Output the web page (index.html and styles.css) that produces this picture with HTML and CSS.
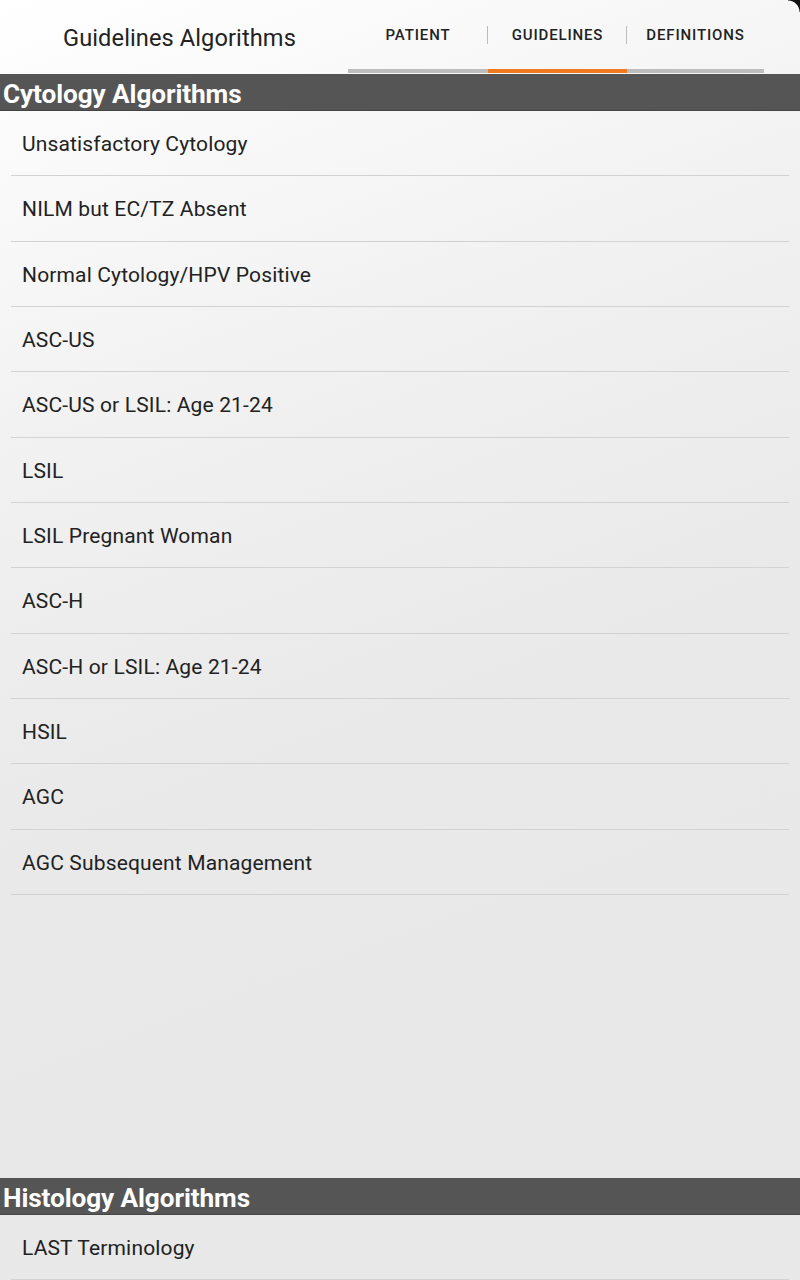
FILE: index.html
```html
<!DOCTYPE html>
<html lang="en">
<head>
<meta charset="utf-8">
<title>Guidelines Algorithms</title>
<link rel="stylesheet" href="styles.css">
</head>
<body>
<div class="screen">
  <header class="appbar">
    <div class="title">Guidelines Algorithms</div>
    <nav class="tabs">
      <div class="tab"><span class="tab-label">PATIENT</span></div>
      <div class="tab active"><span class="tab-label">GUIDELINES</span></div>
      <div class="tab"><span class="tab-label">DEFINITIONS</span></div>
    </nav>
  </header>

  <section class="group group-grow">
    <h2 class="group-title">Cytology Algorithms</h2>
    <ul class="list">
      <li class="item">Unsatisfactory Cytology</li>
      <li class="item">NILM but EC/TZ Absent</li>
      <li class="item">Normal Cytology/HPV Positive</li>
      <li class="item">ASC-US</li>
      <li class="item">ASC-US or LSIL: Age 21-24</li>
      <li class="item">LSIL</li>
      <li class="item">LSIL Pregnant Woman</li>
      <li class="item">ASC-H</li>
      <li class="item">ASC-H or LSIL: Age 21-24</li>
      <li class="item">HSIL</li>
      <li class="item">AGC</li>
      <li class="item">AGC Subsequent Management</li>
    </ul>
  </section>

  <section class="group">
    <h2 class="group-title">Histology Algorithms</h2>
    <ul class="list">
      <li class="item">LAST Terminology</li>
    </ul>
  </section>
  <div class="corner-tr"></div>
</div>
</body>
</html>
```

FILE: styles.css
```css
* { box-sizing: border-box; }

html, body {
  margin: 0;
  padding: 0;
}

body {
  font-family: Roboto, "Liberation Sans", sans-serif;
  color: #222;
}

.screen {
  position: relative;
  width: 800px;
  height: 1280px;
  display: flex;
  flex-direction: column;
  overflow: hidden;
  background: linear-gradient(160deg, #ffffff 0%, #f1f1f1 30%, #e9e9e9 55%, #e8e8e8 100%);
}

.appbar {
  height: 74px;
  display: flex;
  flex-shrink: 0;
}

.title {
  width: 348px;
  padding-left: 63px;
  padding-top: 1px;
  font-size: 23.6px;
  line-height: 74px;
  color: #222;
  letter-spacing: 0.1px;
}

.tabs {
  display: grid;
  grid-template-columns: 140px 139px 137px;
  width: 416px;
  height: 74px;
  padding-bottom: 1px;
}

.tab {
  position: relative;
  display: flex;
  align-items: center;
  justify-content: center;
  border-bottom: 4px solid #bdbdbd;
}

.tab + .tab::before {
  content: "";
  position: absolute;
  left: -1px;
  top: 26px;
  height: 18px;
  width: 1px;
  background: #bdbdbd;
}

.tab.active {
  border-bottom-color: #f07a1f;
}

.tab-label {
  font-size: 15px;
  font-weight: 500;
  letter-spacing: 0.85px;
  color: #222;
}

.group {
  display: flex;
  flex-direction: column;
  flex-shrink: 0;
}

.group-grow {
  flex: 1;
}

.group-title {
  margin: 0;
  height: 37px;
  background: #555555;
  border-bottom: 1px solid #444;
  color: #fff;
  font-size: 26.2px;
  font-weight: 700;
  line-height: 36px;
  padding-top: 2px;
  padding-left: 3px;
  letter-spacing: -0.1px;
}

.list {
  list-style: none;
  margin: 0;
  padding: 0;
}

.item {
  height: 65.33px;
  margin: 0 11px;
  padding-left: 11px;
  padding-top: 2px;
  border-bottom: 1.5px solid #d2d2d2;
  display: flex;
  align-items: center;
  font-size: 21px;
  color: #222;
  letter-spacing: 0.15px;
}

.corner-tr {
  position: absolute;
  top: 0;
  right: 0;
  width: 12px;
  height: 12px;
  background: radial-gradient(circle at 0 100%, transparent 11px, #111 12px);
}
```
